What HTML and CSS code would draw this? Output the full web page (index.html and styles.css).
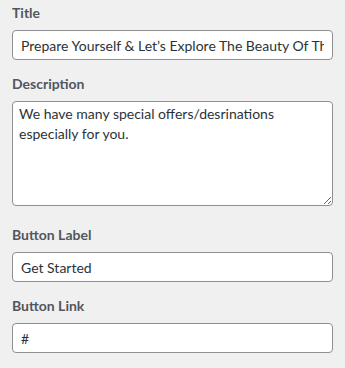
FILE: index.html
```html
<!DOCTYPE html>
<html lang="en">
<head>
    <meta charset="UTF-8">
    <meta name="viewport" content="width=device-width, initial-scale=1.0">
    <title>Banner Fields</title>
    <link rel="stylesheet" href="styles.css">
</head>
<body>
    <form id="bannerFields">
        <div class="field">
            <label for="title">Title</label>
            <input type="text" id="title" name="title" value="Prepare Yourself &amp; Let’s Explore The Beauty Of The World">
        </div>
        <div class="field field-text">
            <label for="description">Description</label>
            <textarea id="description" name="description">We have many special offers/desrinations especially for you.</textarea>
        </div>
        <div class="field">
            <label for="buttonLabel">Button Label</label>
            <input type="text" id="buttonLabel" name="buttonLabel" value="Get Started">
        </div>
        <div class="field">
            <label for="buttonLink">Button Link</label>
            <input type="text" id="buttonLink" name="buttonLink" value="#">
        </div>
    </form>
</body>
</html>
```

FILE: styles.css
```css
body {
    margin: 0;
    padding: 3px 12px 0;
    background-color: #f0f0f1;
    font-family: Lato, "Open Sans", sans-serif;
    font-size: 14px;
}
.field {
    margin-bottom: 14px;
}
.field-text {
    margin-bottom: 19px;
}
.field label {
    display: block;
    font-weight: bold;
    line-height: 20px;
    color: #50575e;
    margin-bottom: 7px;
}
.field input,
.field textarea {
    display: block;
    box-sizing: border-box;
    width: 100%;
    margin: 0;
    border: 1px solid #8c8f94;
    border-radius: 4px;
    background-color: #fff;
    color: #2c3338;
    font-family: inherit;
    font-size: 14px;
}
.field input {
    height: 30px;
    padding: 0 8px;
    line-height: 2;
}
.field textarea {
    height: 105px;
    padding: 2px 6px;
    line-height: 20px;
}
```
